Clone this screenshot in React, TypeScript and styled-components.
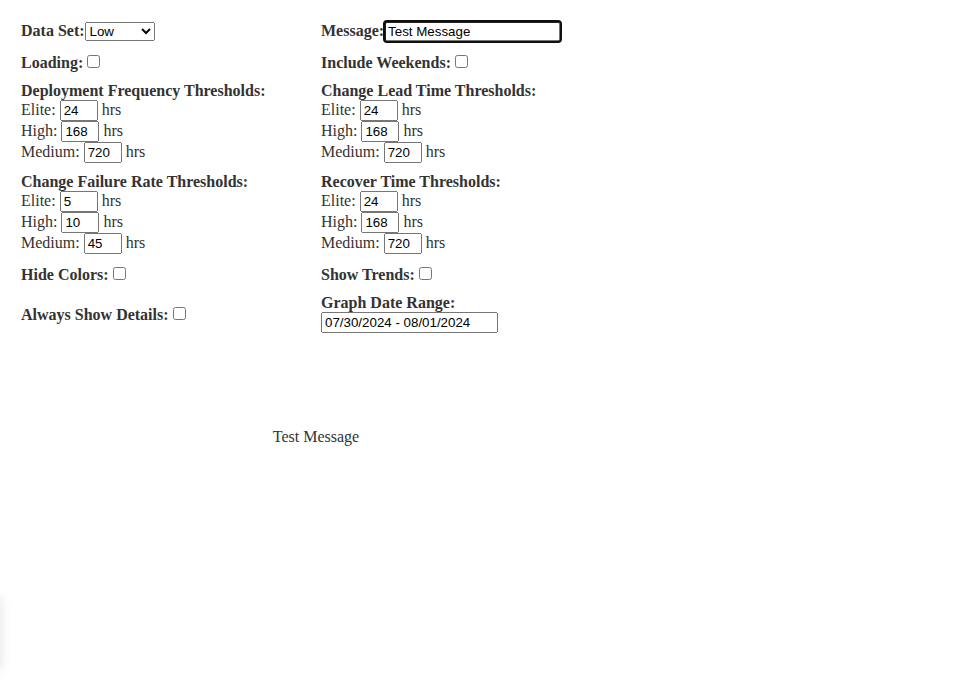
import React from "react";
import styled, { createGlobalStyle } from "styled-components";

const GlobalStyle = createGlobalStyle`
  body {
    margin: 8px;
    background: #ffffff;
    font-family: "Liberation Serif", "Times New Roman", serif;
    font-size: 16px;
    color: #333333;
  }
`;

const Page = styled.div`
  padding: 13px 0 0 13px;
  width: 590px;
`;

const Grid = styled.div`
  display: grid;
  grid-template-columns: 300px 300px;
  row-gap: 10px;
  align-items: center;
`;

const Field = styled.div`
  display: block;
`;

const BoldLabel = styled.label`
  font-weight: bold;
`;

const Check = styled.input.attrs({ type: "checkbox" })`
  margin-left: 4px;
`;

const Title = styled.div`
  font-weight: bold;
`;

const Line = styled.div`
  display: block;
`;

const NumInput = styled.input`
  width: 38px;
  box-sizing: border-box;
`;

const WideInput = styled.input<{ $focused?: boolean }>`
  width: 177px;
  box-sizing: border-box;
  ${(p) => (p.$focused ? "outline: 2px solid #101010; outline-offset: -1px; border-radius: 3px;" : "")}
`;

const Select = styled.select`
  width: 70px;
`;

const Message = styled.div`
  margin-top: 95px;
  text-align: center;
`;

const Shadow = styled.div`
  position: fixed;
  left: -300px;
  top: 598px;
  width: 300px;
  height: 72px;
  background: #fff;
  box-shadow: 0 0 12px rgba(0, 0, 0, 0.12);
`;

type Thresh = { title: string; elite: string; high: string; medium: string };

const Thresholds: React.FC<Thresh> = ({ title, elite, high, medium }) => (
  <Field>
    <Title>{title}</Title>
    <Line>
      Elite: <NumInput type="text" defaultValue={elite} /> hrs
    </Line>
    <Line>
      High: <NumInput type="text" defaultValue={high} /> hrs
    </Line>
    <Line>
      Medium: <NumInput type="text" defaultValue={medium} /> hrs
    </Line>
  </Field>
);

export default function App() {
  return (
    <>
      <GlobalStyle />
      <Page>
        <Grid>
          <Field>
            <BoldLabel>Data Set:</BoldLabel>
            <Select defaultValue="Low">
              <option>Low</option>
              <option>Medium</option>
              <option>High</option>
            </Select>
          </Field>
          <Field>
            <BoldLabel>Message:</BoldLabel>
            <WideInput type="text" defaultValue="Test Message" $focused />
          </Field>
          <Field>
            <BoldLabel>Loading:</BoldLabel>
            <Check />
          </Field>
          <Field>
            <BoldLabel>Include Weekends:</BoldLabel>
            <Check />
          </Field>
          <Thresholds title="Deployment Frequency Thresholds:" elite="24" high="168" medium="720" />
          <Thresholds title="Change Lead Time Thresholds:" elite="24" high="168" medium="720" />
          <Thresholds title="Change Failure Rate Thresholds:" elite="5" high="10" medium="45" />
          <Thresholds title="Recover Time Thresholds:" elite="24" high="168" medium="720" />
          <Field>
            <BoldLabel>Hide Colors:</BoldLabel>
            <Check />
          </Field>
          <Field>
            <BoldLabel>Show Trends:</BoldLabel>
            <Check />
          </Field>
          <Field>
            <BoldLabel>Always Show Details:</BoldLabel>
            <Check />
          </Field>
          <Field>
            <Title>Graph Date Range:</Title>
            <WideInput type="text" defaultValue="07/30/2024 - 08/01/2024" />
          </Field>
        </Grid>
        <Message>Test Message</Message>
      </Page>
      <Shadow />
    </>
  );
}
